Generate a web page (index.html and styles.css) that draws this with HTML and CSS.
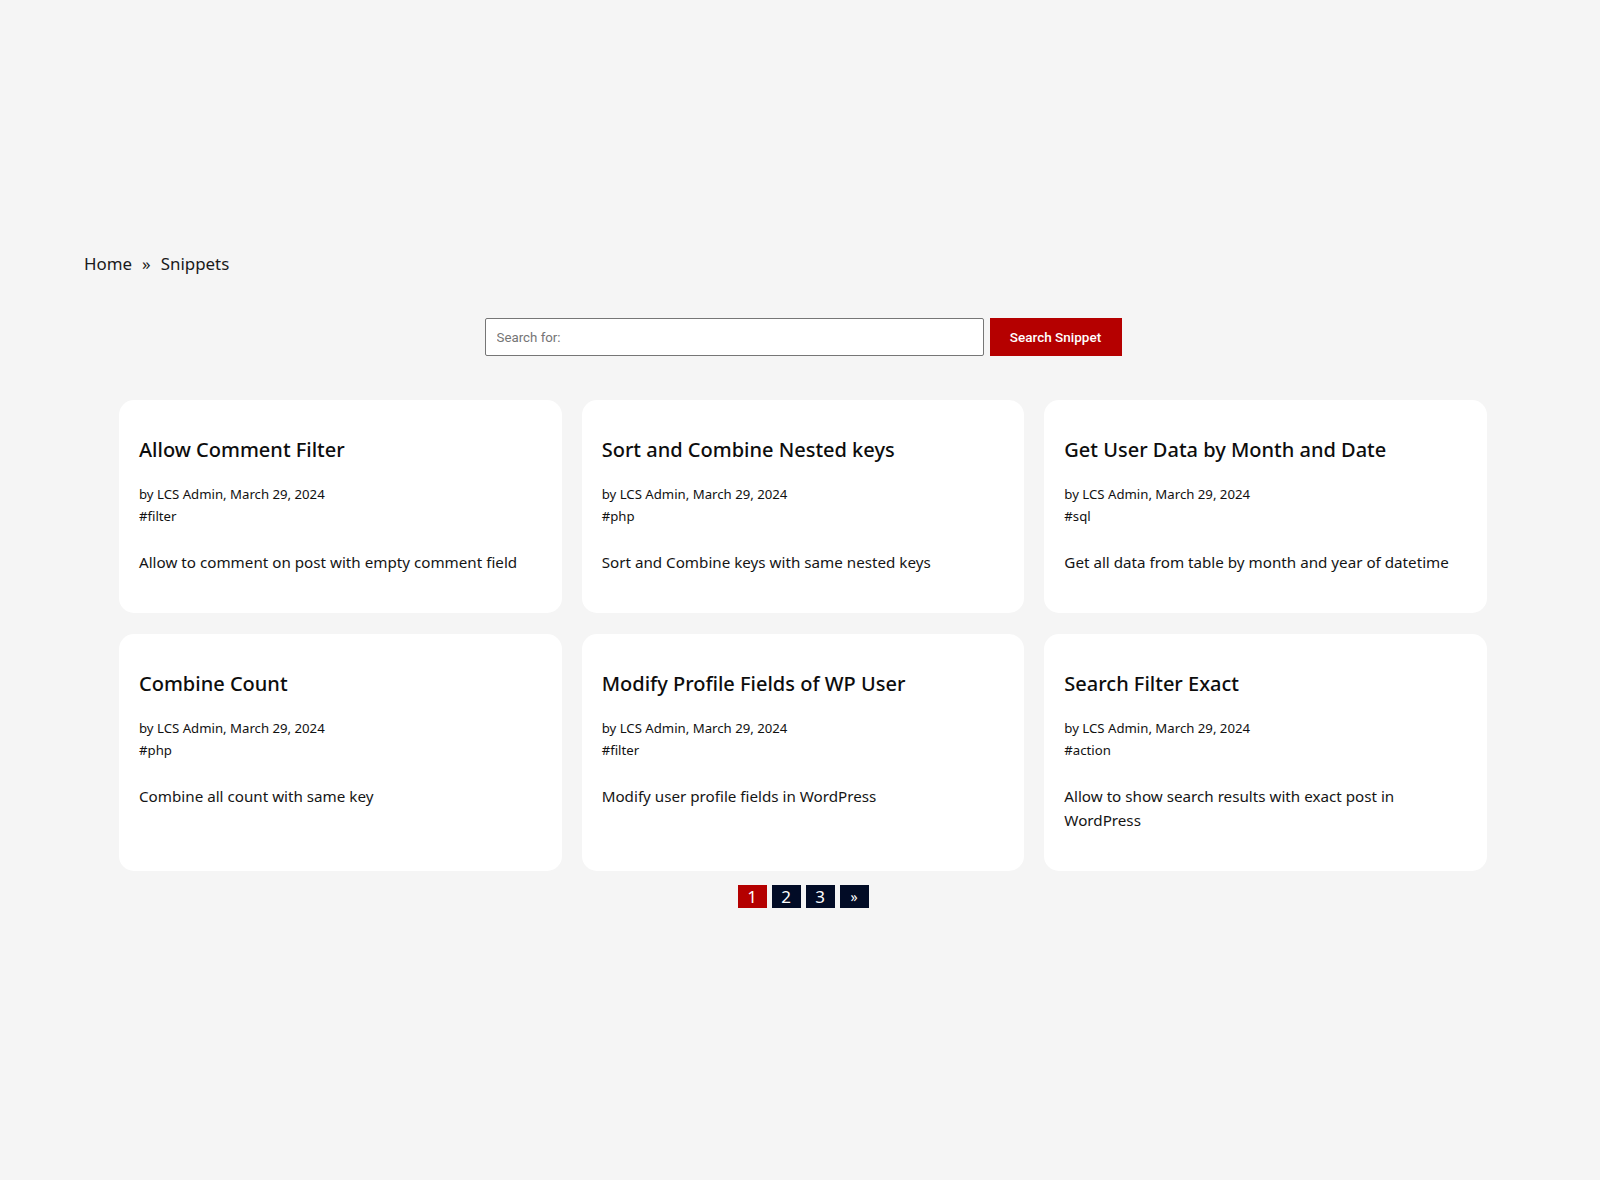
FILE: index.html
```html
<!DOCTYPE html>
<html lang="en">
<head>
<meta charset="utf-8">
<title>Snippets</title>
<link rel="stylesheet" href="styles.css">
</head>
<body>
<div class="page">
  <nav class="breadcrumb">
    <a class="crumb" href="#">Home</a>
    <span class="sep">»</span>
    <span class="crumb">Snippets</span>
  </nav>

  <form class="search">
    <input class="search-input" type="text" placeholder="Search for:">
    <button class="search-btn" type="button">Search Snippet</button>
  </form>

  <div class="grid">
    <article class="card">
      <h3 class="card-title">Allow Comment Filter</h3>
      <div class="meta">
        <div>by LCS Admin, March 29, 2024</div>
        <div>#filter</div>
      </div>
      <p class="desc">Allow to comment on post with empty comment field</p>
    </article>
    <article class="card">
      <h3 class="card-title">Sort and Combine Nested keys</h3>
      <div class="meta">
        <div>by LCS Admin, March 29, 2024</div>
        <div>#php</div>
      </div>
      <p class="desc">Sort and Combine keys with same nested keys</p>
    </article>
    <article class="card">
      <h3 class="card-title">Get User Data by Month and Date</h3>
      <div class="meta">
        <div>by LCS Admin, March 29, 2024</div>
        <div>#sql</div>
      </div>
      <p class="desc">Get all data from table by month and year of datetime</p>
    </article>
    <article class="card">
      <h3 class="card-title">Combine Count</h3>
      <div class="meta">
        <div>by LCS Admin, March 29, 2024</div>
        <div>#php</div>
      </div>
      <p class="desc">Combine all count with same key</p>
    </article>
    <article class="card">
      <h3 class="card-title">Modify Profile Fields of WP User</h3>
      <div class="meta">
        <div>by LCS Admin, March 29, 2024</div>
        <div>#filter</div>
      </div>
      <p class="desc">Modify user profile fields in WordPress</p>
    </article>
    <article class="card">
      <h3 class="card-title">Search Filter Exact</h3>
      <div class="meta">
        <div>by LCS Admin, March 29, 2024</div>
        <div>#action</div>
      </div>
      <p class="desc">Allow to show search results with exact post in WordPress</p>
    </article>
  </div>

  <nav class="pagination">
    <span class="page-num current">1</span>
    <a class="page-num" href="#">2</a>
    <a class="page-num" href="#">3</a>
    <a class="page-num next" href="#">»</a>
  </nav>
</div>
</body>
</html>
```

FILE: styles.css
```css
html, body {
  margin: 0;
  padding: 0;
}

body {
  background: #f5f5f5;
  font-family: "Noto Sans", "Open Sans", sans-serif;
  color: #111111;
}

.page {
  min-height: 1180px;
  box-sizing: border-box;
  padding: 252px 0 0 6px;
}

.breadcrumb {
  margin-left: 78px;
  display: flex;
  align-items: baseline;
  font-size: 16.9px;
  line-height: 24px;
  color: #1a1a1a;
}

.crumb {
  color: #1a1a1a;
  text-decoration: none;
}

.sep {
  margin: 0 10px 0 10px;
}

.search {
  margin: 42px 0 0;
  display: flex;
  justify-content: center;
  gap: 6px;
}

.search-input {
  width: 499px;
  height: 38px;
  box-sizing: border-box;
  margin: 0;
  border: 1px solid #767676;
  border-radius: 2px;
  padding: 0 11px;
  background: #ffffff;
  font-family: Roboto, "Liberation Sans", sans-serif;
  font-size: 13.3px;
  color: #333333;
  outline: none;
}

.search-input::placeholder {
  color: #757575;
}

.search-btn {
  width: 132px;
  height: 38px;
  margin: 0;
  border: 0;
  border-radius: 0;
  background: #b50000;
  color: #ffffff;
  font-family: Roboto, "Liberation Sans", sans-serif;
  font-weight: 500;
  font-size: 13.5px;
  cursor: pointer;
}

.grid {
  width: 1368px;
  margin: 44px auto 0;
  display: grid;
  grid-template-columns: repeat(3, 1fr);
  column-gap: 20px;
  row-gap: 21px;
}

.card {
  background: #ffffff;
  border-radius: 15px;
  padding: 36px 24px 39px 20px;
}

.card-title {
  margin: 0;
  font-size: 20px;
  line-height: 28px;
  font-weight: 500;
  color: #0d0d0d;
}

.meta {
  margin-top: 19px;
  font-size: 13.2px;
  line-height: 22px;
  color: #111111;
}

.desc {
  margin: 23px 0 0;
  font-size: 15.2px;
  line-height: 24px;
  color: #151515;
}

.pagination {
  margin-top: 14px;
  display: flex;
  justify-content: center;
  gap: 5px;
}

.page-num {
  width: 29px;
  height: 23px;
  line-height: 23px;
  text-align: center;
  font-size: 17px;
  color: #ffffff;
  background: #020c26;
  text-decoration: none;
}

.page-num.current {
  background: #b40000;
}

.page-num.next {
  font-size: 14px;
}
```
